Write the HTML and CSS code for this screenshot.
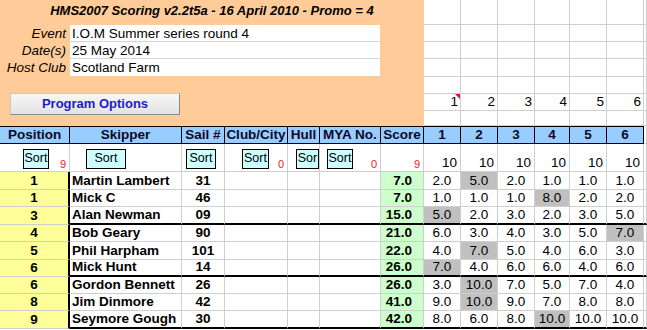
FILE: index.html
```html
<!DOCTYPE html>
<html>
<head>
<meta charset="utf-8">
<link rel="stylesheet" href="styles.css">
</head>
<body>
<div class="sheet">
  <div class="top">
    <div class="panel">
      <div class="title">HMS2007 Scoring v2.2t5a - 16 April 2010 - Promo = 4</div>
      <div class="info">
        <div class="info-row"><span class="label">Event</span><span class="value">I.O.M Summer series round 4</span></div>
        <div class="info-row"><span class="label">Date(s)</span><span class="value">25 May 2014</span></div>
        <div class="info-row"><span class="label">Host Club</span><span class="value last">Scotland Farm</span></div>
      </div>
      <div class="btn-wrap"><button class="prog-btn">Program Options</button></div>
    </div>
    <div class="grid-top">
      <div class="trow h25"><div class="cell c8"></div><div class="cell c9"></div><div class="cell c10"></div><div class="cell c11"></div><div class="cell c12"></div><div class="cell c13"></div><div class="cell c14"></div></div>
      <div class="trow h17"><div class="cell c8"></div><div class="cell c9"></div><div class="cell c10"></div><div class="cell c11"></div><div class="cell c12"></div><div class="cell c13"></div><div class="cell c14"></div></div>
      <div class="trow h17"><div class="cell c8"></div><div class="cell c9"></div><div class="cell c10"></div><div class="cell c11"></div><div class="cell c12"></div><div class="cell c13"></div><div class="cell c14"></div></div>
      <div class="trow h18"><div class="cell c8"></div><div class="cell c9"></div><div class="cell c10"></div><div class="cell c11"></div><div class="cell c12"></div><div class="cell c13"></div><div class="cell c14"></div></div>
      <div class="trow h17"><div class="cell c8"></div><div class="cell c9"></div><div class="cell c10"></div><div class="cell c11"></div><div class="cell c12"></div><div class="cell c13"></div><div class="cell c14"></div></div>
      <div class="trow h17"><div class="cell c8 num has-note">1<span class="note"></span></div><div class="cell c9 num">2</div><div class="cell c10 num">3</div><div class="cell c11 num">4</div><div class="cell c12 num">5</div><div class="cell c13 num">6</div><div class="cell c14"></div></div>
      <div class="trow h15"><div class="cell c8"></div><div class="cell c9"></div><div class="cell c10"></div><div class="cell c11"></div><div class="cell c12"></div><div class="cell c13"></div><div class="cell c14"></div></div>
    </div>
  </div>

  <div class="row hdr">
    <div class="cell c1">Position</div><div class="cell c2">Skipper</div><div class="cell c3">Sail #</div><div class="cell c4">Club/City</div><div class="cell c5">Hull</div><div class="cell c6">MYA No.</div><div class="cell c7">Score</div><div class="cell c8">1</div><div class="cell c9">2</div><div class="cell c10">3</div><div class="cell c11">4</div><div class="cell c12">5</div><div class="cell c13">6</div><div class="cell c14 blank"></div>
  </div>

  <div class="row sortrow">
    <div class="cell c1"><span class="sort s-pos">Sort</span><span class="red">9</span></div>
    <div class="cell c2"><span class="sort s-skip">Sort</span></div>
    <div class="cell c3"><span class="sort s-sail">Sort</span></div>
    <div class="cell c4"><span class="sort s-club">Sort</span><span class="red">0</span></div>
    <div class="cell c5"><span class="sort s-hull">Sor</span></div>
    <div class="cell c6"><span class="sort s-mya">Sort</span><span class="red">0</span></div>
    <div class="cell c7"><span class="red">9</span></div>
    <div class="cell c8"><span class="ten">10</span></div>
    <div class="cell c9"><span class="ten">10</span></div>
    <div class="cell c10"><span class="ten">10</span></div>
    <div class="cell c11"><span class="ten">10</span></div>
    <div class="cell c12"><span class="ten">10</span></div>
    <div class="cell c13"><span class="ten">10</span></div>
    <div class="cell c14"></div>
  </div>

  <div class="row data h18">
    <div class="cell c1 pos">1</div><div class="cell c2 name">Martin Lambert</div><div class="cell c3 sail">31</div><div class="cell c4"></div><div class="cell c5"></div><div class="cell c6"></div><div class="cell c7 score">7.0</div>
    <div class="cell c8 race">2.0</div><div class="cell c9 race disc">5.0</div><div class="cell c10 race">2.0</div><div class="cell c11 race">1.0</div><div class="cell c12 race">1.0</div><div class="cell c13 race">1.0</div><div class="cell c14"></div>
  </div>
  <div class="row data h17">
    <div class="cell c1 pos">1</div><div class="cell c2 name">Mick C</div><div class="cell c3 sail">46</div><div class="cell c4"></div><div class="cell c5"></div><div class="cell c6"></div><div class="cell c7 score">7.0</div>
    <div class="cell c8 race">1.0</div><div class="cell c9 race">1.0</div><div class="cell c10 race">1.0</div><div class="cell c11 race disc">8.0</div><div class="cell c12 race">2.0</div><div class="cell c13 race">2.0</div><div class="cell c14"></div>
  </div>
  <div class="row data h18 grp-end">
    <div class="cell c1 pos">3</div><div class="cell c2 name">Alan Newman</div><div class="cell c3 sail">09</div><div class="cell c4"></div><div class="cell c5"></div><div class="cell c6"></div><div class="cell c7 score">15.0</div>
    <div class="cell c8 race disc">5.0</div><div class="cell c9 race">2.0</div><div class="cell c10 race">3.0</div><div class="cell c11 race">2.0</div><div class="cell c12 race">3.0</div><div class="cell c13 race">5.0</div><div class="cell c14"></div>
  </div>
  <div class="row data h17">
    <div class="cell c1 pos">4</div><div class="cell c2 name">Bob Geary</div><div class="cell c3 sail">90</div><div class="cell c4"></div><div class="cell c5"></div><div class="cell c6"></div><div class="cell c7 score">21.0</div>
    <div class="cell c8 race">6.0</div><div class="cell c9 race">3.0</div><div class="cell c10 race">4.0</div><div class="cell c11 race">3.0</div><div class="cell c12 race">5.0</div><div class="cell c13 race disc">7.0</div><div class="cell c14"></div>
  </div>
  <div class="row data h18">
    <div class="cell c1 pos">5</div><div class="cell c2 name">Phil Harpham</div><div class="cell c3 sail">101</div><div class="cell c4"></div><div class="cell c5"></div><div class="cell c6"></div><div class="cell c7 score">22.0</div>
    <div class="cell c8 race">4.0</div><div class="cell c9 race disc">7.0</div><div class="cell c10 race">5.0</div><div class="cell c11 race">4.0</div><div class="cell c12 race">6.0</div><div class="cell c13 race">3.0</div><div class="cell c14"></div>
  </div>
  <div class="row data h17 grp-end">
    <div class="cell c1 pos">6</div><div class="cell c2 name">Mick Hunt</div><div class="cell c3 sail">14</div><div class="cell c4"></div><div class="cell c5"></div><div class="cell c6"></div><div class="cell c7 score">26.0</div>
    <div class="cell c8 race disc">7.0</div><div class="cell c9 race">4.0</div><div class="cell c10 race">6.0</div><div class="cell c11 race">6.0</div><div class="cell c12 race">4.0</div><div class="cell c13 race">6.0</div><div class="cell c14"></div>
  </div>
  <div class="row data h17">
    <div class="cell c1 pos">6</div><div class="cell c2 name">Gordon Bennett</div><div class="cell c3 sail">26</div><div class="cell c4"></div><div class="cell c5"></div><div class="cell c6"></div><div class="cell c7 score">26.0</div>
    <div class="cell c8 race">3.0</div><div class="cell c9 race disc">10.0</div><div class="cell c10 race">7.0</div><div class="cell c11 race">5.0</div><div class="cell c12 race">7.0</div><div class="cell c13 race">4.0</div><div class="cell c14"></div>
  </div>
  <div class="row data h17">
    <div class="cell c1 pos">8</div><div class="cell c2 name">Jim Dinmore</div><div class="cell c3 sail">42</div><div class="cell c4"></div><div class="cell c5"></div><div class="cell c6"></div><div class="cell c7 score">41.0</div>
    <div class="cell c8 race">9.0</div><div class="cell c9 race disc">10.0</div><div class="cell c10 race">9.0</div><div class="cell c11 race">7.0</div><div class="cell c12 race">8.0</div><div class="cell c13 race">8.0</div><div class="cell c14"></div>
  </div>
  <div class="row data h18 grp-end">
    <div class="cell c1 pos">9</div><div class="cell c2 name">Seymore Gough</div><div class="cell c3 sail">30</div><div class="cell c4"></div><div class="cell c5"></div><div class="cell c6"></div><div class="cell c7 score">42.0</div>
    <div class="cell c8 race">8.0</div><div class="cell c9 race">6.0</div><div class="cell c10 race">8.0</div><div class="cell c11 race disc">10.0</div><div class="cell c12 race">10.0</div><div class="cell c13 race">10.0</div><div class="cell c14"></div>
  </div>
</div>
</body>
</html>
```

FILE: styles.css
```css
* { box-sizing: border-box; }
html, body { margin: 0; padding: 0; background: #fff; }
body { font-family: "Liberation Sans", Arial, sans-serif; font-size: 13px; color: #000; }

.sheet { width: 647px; height: 330px; overflow: hidden; }

.top { display: flex; height: 126px; }
.panel { width: 424px; height: 126px; background: #FFCC99; display: flex; flex-direction: column; flex: none; }
.title { height: 25px; text-align: center; font-weight: bold; font-style: italic; font-size: 13px; line-height: 15px; padding-top: 3px; }
.info { display: flex; flex-direction: column; }
.info-row { display: flex; height: 17px; }
.label { width: 70px; text-align: right; padding-right: 4px; font-style: italic; font-size: 13.5px; line-height: 15px; padding-top: 1px; }
.value { width: 310px; background: #fff; border-bottom: 1px solid #d4d4d4; padding-left: 2px; font-size: 13.5px; line-height: 15px; padding-top: 1px; }
.value.last { border-bottom: none; }
.btn-wrap { padding: 17px 0 0 10px; }
.prog-btn {
  width: 170px; height: 22px; margin: 0; padding: 0;
  font-family: "Liberation Sans", Arial, sans-serif; font-size: 13px; font-weight: bold; color: #1c1cc8;
  background: linear-gradient(#f7f7f7, #e2e2e2);
  border: 1px solid #c8c8c8; border-right-color: #8a8a8a; border-bottom-color: #8a8a8a;
  text-align: center; line-height: 18px;
}

.grid-top { display: flex; flex-direction: column; }
.trow { display: flex; }
.h25 { height: 25px; }
.h18 { height: 18px; }
.h17 { height: 17px; }
.h15 { height: 15px; }

.row { display: flex; }
.cell { flex: none; height: 100%; border-right: 1px solid #cfcfcf; border-bottom: 1px solid #cfcfcf; display: flex; align-items: flex-end; line-height: 15px; white-space: nowrap; overflow: hidden; position: relative; }
.c1 { width: 70px; } .c2 { width: 112px; } .c3 { width: 43px; } .c4 { width: 63px; }
.c5 { width: 32px; } .c6 { width: 61px; } .c7 { width: 43px; } .c8 { width: 37px; }
.c9 { width: 37px; } .c10 { width: 37px; } .c11 { width: 35px; } .c12 { width: 37px; }
.c13 { width: 37px; } .c14 { width: 3px; }

.num { justify-content: flex-end; padding-right: 2px; padding-bottom: 1px; font-size: 13.5px; }
.has-note { overflow: visible; }
.note { position: absolute; top: 0; right: 0; width: 0; height: 0; border-top: 5px solid #e0102a; border-left: 5px solid transparent; }

.hdr { height: 18px; }
.hdr .cell { background: #99CCFF; border-top: 1px solid #000; border-right: 1px solid #000; border-bottom: 1px solid #000; justify-content: center; font-weight: bold; font-size: 13.5px; padding-bottom: 1px; color: #0a0a28; }
.hdr .cell.blank { background: #fff; border-right: 1px solid #cfcfcf; border-top: none; border-bottom: 1px solid #cfcfcf; }

.sortrow { height: 28px; }
.sortrow .cell { padding-bottom: 1px; }
.sort { display: inline-block; height: 20px; margin-bottom: 1px; background: #CCFFFF; border: 1px solid #000; font-family: "Liberation Sans Narrow", "Liberation Sans", Arial, sans-serif; font-size: 12.5px; line-height: 17px; text-align: center; flex: none; overflow: hidden; }
.s-pos { width: 26px; margin-left: 23px; }
.s-skip { width: 40px; margin-left: 16px; }
.s-sail { width: 30px; margin-left: 4px; }
.s-club { width: 27px; margin-left: 17px; }
.s-hull { width: 23px; margin-left: 8px; }
.s-mya { width: 26px; margin-left: 7px; }
.red { margin-left: auto; padding-right: 3px; color: #ee2020; font-size: 11px; line-height: 12px; }
.ten { margin-left: auto; padding-right: 3px; line-height: 15px; font-size: 13.5px; }

.data .cell { padding-bottom: 1px; font-size: 13.5px; }
.data .pos { background: #FFFF99; justify-content: center; font-weight: bold; border-right: 2px solid #000; }
.data .name { font-weight: bold; padding-left: 2px; }
.data .sail { font-weight: bold; justify-content: center; }
.data .score { background: #CCFFCC; font-weight: bold; justify-content: flex-end; padding-right: 11px; }
.data .race { justify-content: center; }
.data .disc { background: #C0C0C0; }
.grp-end .cell { border-bottom: 2px solid #000; }
.grp-end .cell.pos { border-bottom: 1px solid #cfcfcf; }
```
